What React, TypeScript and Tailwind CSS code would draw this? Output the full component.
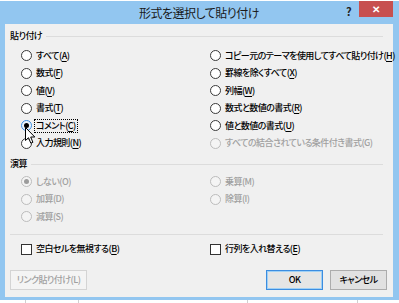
import React from "react";

type Opt = {
  text: string;
  k?: string;
  disabled?: boolean;
  checked?: boolean;
  hot?: boolean;
  focus?: boolean;
};

const jp = "font-['Noto_Sans_CJK_JP',sans-serif] [font-feature-settings:'palt']";

function Caption({ opt }: { opt: Opt }) {
  if (!opt.k) return <>{opt.text}</>;
  if (opt.disabled) return <>{opt.text}({opt.k})</>;
  return (
    <>
      {opt.text}(<span className="underline underline-offset-[2px]">{opt.k}</span>)
    </>
  );
}

function RadioDot({ opt }: { opt: Opt }) {
  const ring = opt.disabled
    ? "border-[#bcbcbc] bg-[#f4f4f4]"
    : opt.hot
    ? "border-[#3c8de0] bg-[#eaf4fd]"
    : "border-[#3a3a3a] bg-white";
  return (
    <span className={`flex h-[11px] w-[11px] shrink-0 items-center justify-center rounded-full border ${ring}`}>
      {opt.checked && (
        <span className={`h-[5px] w-[5px] rounded-full ${opt.disabled ? "bg-[#9c9c9c]" : "bg-black"}`} />
      )}
    </span>
  );
}

function Radio({ opt }: { opt: Opt }) {
  return (
    <div className="flex h-[17.5px] items-center gap-[2px]">
      <RadioDot opt={opt} />
      <span
        className={`whitespace-nowrap leading-[12px] ${opt.disabled ? "text-[#a0a0a0]" : "text-black"} ${
          opt.focus ? "border border-dotted border-black px-[1px]" : "border border-transparent px-[1px]"
        }`}
      >
        <Caption opt={opt} />
      </span>
    </div>
  );
}

function Check({ opt }: { opt: Opt }) {
  return (
    <div className="flex h-[17px] items-center gap-[4px]">
      <span className="h-[11px] w-[11px] shrink-0 border border-[#333] bg-white" />
      <span className="whitespace-nowrap text-black">
        <Caption opt={opt} />
      </span>
    </div>
  );
}

function GroupHeader({ label }: { label: string }) {
  return (
    <div className="flex h-[14px] items-center gap-[4px]">
      <span className="whitespace-nowrap text-black">{label}</span>
      <span className="mr-[5px] h-px flex-1 bg-[#dcdcdc]" />
    </div>
  );
}

const pasteLeft: Opt[] = [
  { text: "すべて", k: "A" },
  { text: "数式", k: "F" },
  { text: "値", k: "V" },
  { text: "書式", k: "T" },
  { text: "コメント", k: "C", checked: true, hot: true, focus: true },
  { text: "入力規則", k: "N" },
];

const pasteRight: Opt[] = [
  { text: "コピー元のテーマを使用してすべて貼り付け", k: "H" },
  { text: "罫線を除くすべて", k: "X" },
  { text: "列幅", k: "W" },
  { text: "数式と数値の書式", k: "R" },
  { text: "値と数値の書式", k: "U" },
  { text: "すべての結合されている条件付き書式", k: "G", disabled: true },
];

const opLeft: Opt[] = [
  { text: "しない", k: "O", disabled: true, checked: true },
  { text: "加算", k: "D", disabled: true },
  { text: "減算", k: "S", disabled: true },
];

const opRight: Opt[] = [
  { text: "乗算", k: "M", disabled: true },
  { text: "除算", k: "I", disabled: true },
];

function Cursor() {
  return (
    <svg className="pointer-events-none absolute left-[20px] top-[103px]" width="12" height="18" viewBox="0 0 12 18">
      <path
        d="M0.5 0.5 L0.5 13.5 L3.5 10.7 L5.8 16.2 L7.9 15.3 L5.7 10 L9.8 10 Z"
        fill="white"
        stroke="black"
        strokeWidth="1"
        strokeLinejoin="round"
      />
    </svg>
  );
}

export default function App() {
  return (
    <div className={`flex h-[303px] w-[399px] flex-col overflow-hidden bg-white text-[9px] font-medium tracking-[-0.55px] ${jp}`}>
      <div className="h-[1px] bg-white" />
      <div className="flex flex-1 flex-col bg-[#92c6f0] pl-[5px] pr-[6px]">
        {/* title bar */}
        <div className="grid h-[23px] grid-cols-[1fr_auto_1fr] items-start">
          <div />
          <div className="pt-[3px] text-[12px] font-normal leading-[17px] tracking-[-0.5px] text-[#1a1a1a]">形式を選択して貼り付け</div>
          <div className="flex justify-end">
            <span className="mr-[8px] pt-[3px] text-[11px] font-bold leading-[14px] text-[#222]">?</span>
            <span className="flex h-[16px] w-[34px] items-center justify-center bg-[#c75050] text-[10px] font-bold leading-none text-white">
              ✕
            </span>
          </div>
        </div>

        {/* client area */}
        <div className="relative h-[273px] bg-[#f0f0f0] px-[5px]">
          <div className="pt-[5px]">
            <GroupHeader label="貼り付け" />
          </div>
          <div className="mt-[4px] grid grid-cols-[189px_1fr] pl-[11px]">
            <div>
              {pasteLeft.map((o) => (
                <Radio key={o.text} opt={o} />
              ))}
            </div>
            <div>
              {pasteRight.map((o) => (
                <Radio key={o.text} opt={o} />
              ))}
            </div>
          </div>

          <div className="mt-[5px]">
            <GroupHeader label="演算" />
          </div>
          <div className="mt-[2px] grid grid-cols-[189px_1fr] pl-[11px]">
            <div>
              {opLeft.map((o) => (
                <Radio key={o.text} opt={o} />
              ))}
            </div>
            <div>
              {opRight.map((o) => (
                <Radio key={o.text} opt={o} />
              ))}
            </div>
          </div>

          <div className="mr-[5px] mt-[8px] h-px bg-[#dcdcdc]" />

          <div className="mt-[6px] grid grid-cols-[189px_1fr] pl-[11px]">
            <Check opt={{ text: "空白セルを無視する", k: "B" }} />
            <Check opt={{ text: "行列を入れ替える", k: "E" }} />
          </div>

          <div className="mt-[12px] flex items-center pr-[1px]">
            <button className="flex h-[20px] w-[77px] items-center justify-center whitespace-nowrap border border-[#d4d4d4] bg-[#f4f4f4] text-[#a0a0a0]">
              リンク貼り付け(L)
            </button>
            <div className="flex-1" />
            <button className="flex h-[20px] w-[57px] items-center justify-center border border-[#3c8de0] bg-[#e5e5e5] text-black shadow-[inset_0_0_0_1px_#9fd0f5]">
              OK
            </button>
            <button className="ml-[7px] flex h-[20px] w-[57px] items-center justify-center whitespace-nowrap border border-[#acacac] bg-[#e1e1e1] text-black">
              キャンセル
            </button>
          </div>

          <Cursor />
        </div>
        <div className="h-[3px]" />
      </div>
      <div className="relative h-[3px] bg-white">
        <div className="flex h-full">
          <span className="ml-[25px] h-full w-px bg-[#d0d0d0]" />
          <span className="ml-[52px] h-full w-px bg-[#d0d0d0]" />
          <span className="ml-[168px] h-full w-px bg-[#d0d0d0]" />
          <span className="ml-[109px] h-full w-px bg-[#d0d0d0]" />
        </div>
      </div>
    </div>
  );
}
